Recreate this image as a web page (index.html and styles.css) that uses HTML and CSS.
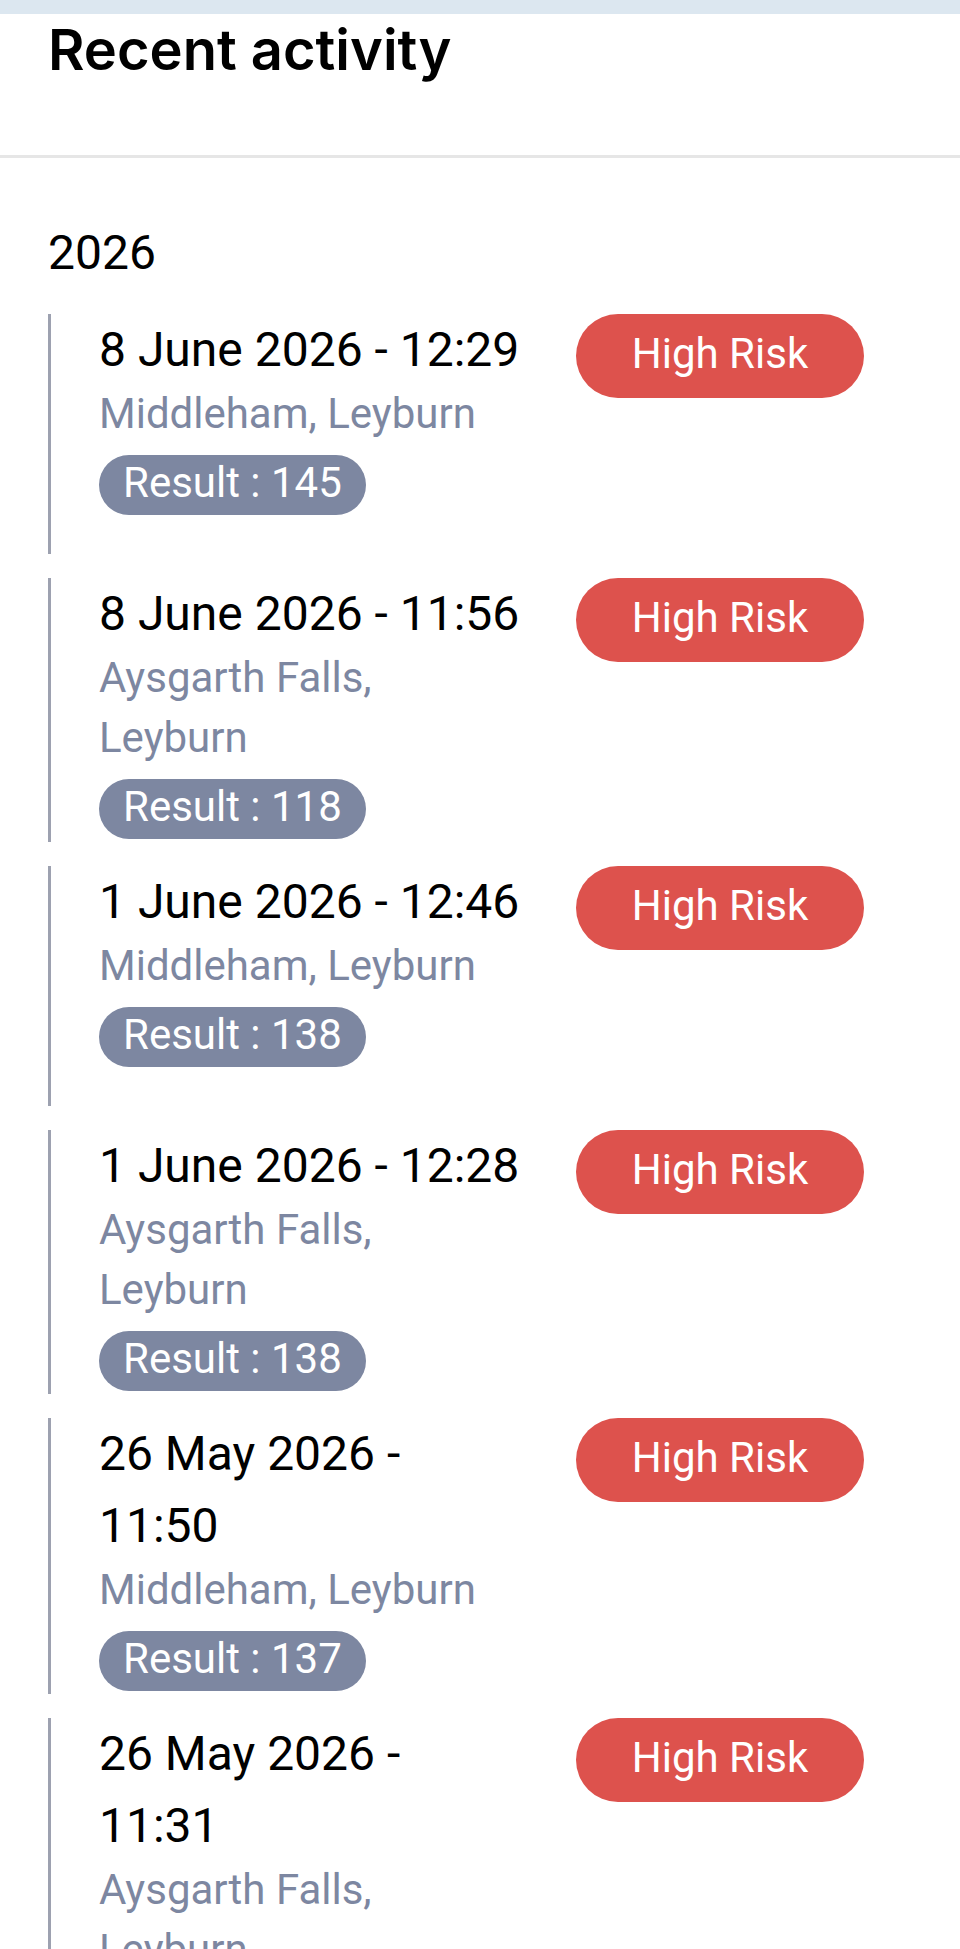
FILE: index.html
```html
<!DOCTYPE html>
<html lang="en">
<head>
  <meta charset="UTF-8">
  <meta name="viewport" content="width=device-width, initial-scale=1.0">
  <title>Recent activity</title>
  <link rel="stylesheet" href="styles.css">
</head>
<body>
  <header class="page-header">
    <h1>Recent activity</h1>
  </header>

  <main class="activity">
    <h2 class="year">2026</h2>

    <ul class="timeline">
      <li class="entry">
        <div class="details">
          <h3>8 June 2026 - 12:29</h3>
          <p class="place">Middleham, Leyburn</p>
          <span class="result">Result : 145</span>
        </div>
        <span class="risk">High Risk</span>
      </li>

      <li class="entry">
        <div class="details">
          <h3>8 June 2026 - 11:56</h3>
          <p class="place">Aysgarth Falls, Leyburn</p>
          <span class="result">Result : 118</span>
        </div>
        <span class="risk">High Risk</span>
      </li>

      <li class="entry">
        <div class="details">
          <h3>1 June 2026 - 12:46</h3>
          <p class="place">Middleham, Leyburn</p>
          <span class="result">Result : 138</span>
        </div>
        <span class="risk">High Risk</span>
      </li>

      <li class="entry">
        <div class="details">
          <h3>1 June 2026 - 12:28</h3>
          <p class="place">Aysgarth Falls, Leyburn</p>
          <span class="result">Result : 138</span>
        </div>
        <span class="risk">High Risk</span>
      </li>

      <li class="entry">
        <div class="details">
          <h3>26 May 2026 - 11:50</h3>
          <p class="place">Middleham, Leyburn</p>
          <span class="result">Result : 137</span>
        </div>
        <span class="risk">High Risk</span>
      </li>

      <li class="entry">
        <div class="details">
          <h3>26 May 2026 - 11:31</h3>
          <p class="place">Aysgarth Falls, Leyburn</p>
        </div>
        <span class="risk">High Risk</span>
      </li>
    </ul>
  </main>
</body>
</html>
```
FILE: styles.css
```css
* {
  box-sizing: border-box;
}

body {
  margin: 0;
  height: 100vh;
  overflow: hidden;
  background-color: #fff;
  color: #000;
  font-family: Roboto, sans-serif;
  font-size: 42px;
  line-height: 60px;
}

h1, h2, h3, p, ul {
  margin: 0;
  padding: 0;
}

.page-header {
  padding: 0 48px 69px;
  border-top: 14px solid #dce7f0;
  border-bottom: 3px solid #e6e6e6;
}

h1 {
  font-family: Inter, sans-serif;
  font-size: 56px;
  font-weight: 600;
  line-height: 72px;
}

.activity {
  padding: 59px 48px 0;
}

.year, h3 {
  font-size: 48px;
  font-weight: 400;
  line-height: 72px;
}

.timeline {
  display: flex;
  flex-direction: column;
  gap: 24px;
  margin-top: 25px;
  list-style: none;
}

.entry {
  display: flex;
  align-items: flex-start;
  gap: 54px;
  min-height: 240px;
  padding: 0 48px 3px;
  border-left: 3px solid #9da1b0;
}

.details {
  flex: 1;
}

.place {
  margin: -2px 0 11px;
  color: #7d87a1;
}

.result {
  display: block;
  width: fit-content;
  height: 60px;
  padding: 0 24px;
  border-radius: 30px;
  background-color: #7d87a1;
  color: #fff;
  line-height: 56px;
}

.risk {
  flex: 0 0 288px;
  height: 84px;
  border-radius: 42px;
  background-color: #dd524d;
  color: #fff;
  text-align: center;
  line-height: 80px;
}
```
